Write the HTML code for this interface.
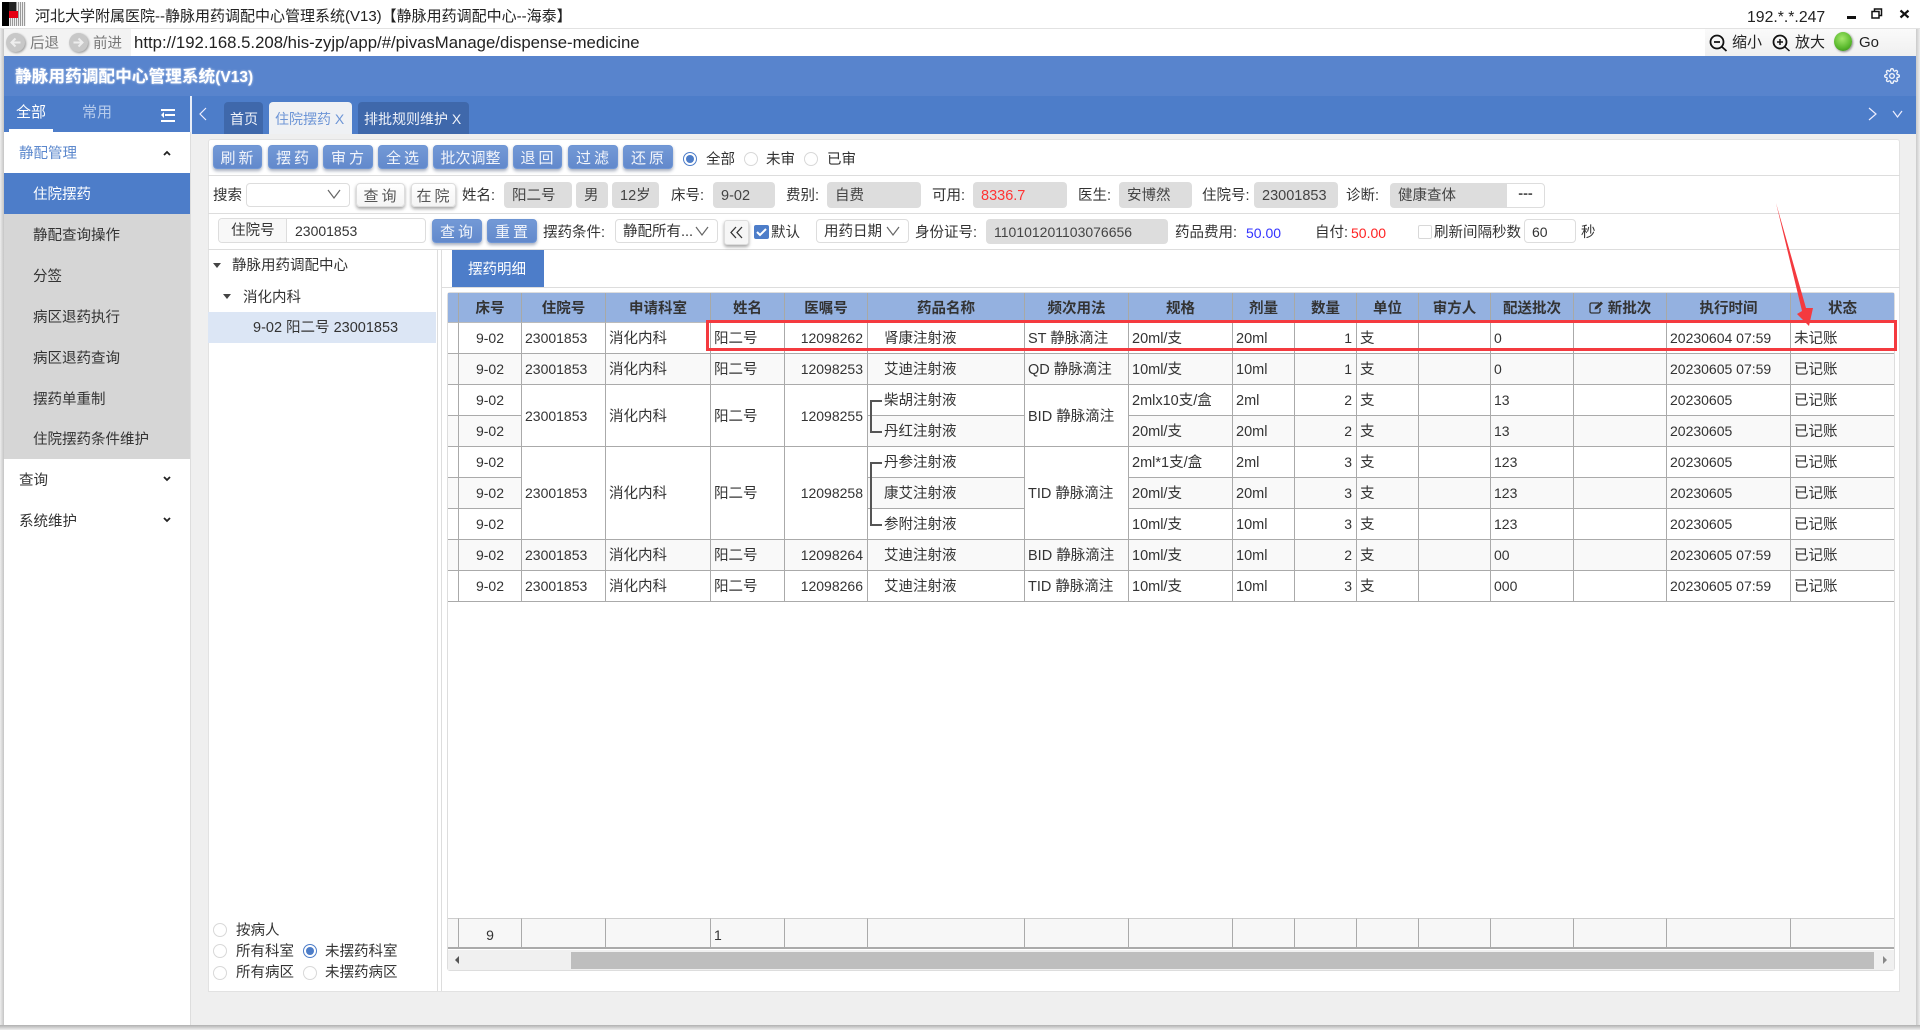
<!DOCTYPE html>
<html lang="zh-CN"><head><meta charset="utf-8"><title>静脉用药调配中心管理系统</title>
<style>
*{box-sizing:border-box}
html,body{margin:0;padding:0;width:1920px;height:1030px;overflow:hidden;background:#fff;font-family:"Liberation Sans","Noto Sans CJK SC",sans-serif;font-size:14.5px;color:#333}
.a{position:absolute;white-space:nowrap;line-height:22px;height:20px}
.k{line-height:20px}
.b{position:absolute}
.btn{position:absolute;height:24px;line-height:25px;background:linear-gradient(#7399d6,#6289cc);border:1px solid #6e95d4;border-radius:4px;box-shadow:0 2px 3px rgba(30,50,90,.4);color:#f2f5fb;text-align:center;letter-spacing:3px;font-size:15px;text-indent:2px}
.btn.n{letter-spacing:0;text-indent:0}
.wbtn{position:absolute;height:24px;line-height:25px;background:linear-gradient(#fff,#f4f4f4);border:1px solid #ddd;border-radius:4px;box-shadow:0 2px 3px rgba(0,0,0,.35);color:#555;text-align:center;letter-spacing:3px;font-size:15px;text-indent:2px}
.f{position:absolute;top:182px;height:26px;line-height:28px;background:#ddd;border-radius:4px;padding-left:8px;color:#444}
.sel{position:absolute;height:24px;line-height:25px;background:#fff;border:1px solid #ddd;border-radius:4px;padding-left:7px}
.rad{position:absolute;width:14px;height:14px;border:1px solid #d8d8d8;border-radius:50%;background:#fff}
.rad.on{border:1px solid #4d7dc8}
.rad.on:after{content:"";position:absolute;left:2px;top:2px;width:8px;height:8px;border-radius:50%;background:#4d7dc8}
.hl{position:absolute;height:1px;background:#ddd;left:208px;width:1692px}
.m{position:absolute;left:33px;line-height:24px;white-space:nowrap}
table{position:absolute;left:448px;top:293px;width:1446px;border-collapse:separate;border-spacing:0;table-layout:fixed}
th{height:30px;background:#94b1e0;border-right:1px solid #a8a9a6;border-bottom:1px solid #bbb;font-weight:bold;font-size:14.5px;color:#333;text-align:center;padding:0;white-space:nowrap}
th:last-child{border-right:0}
td{height:31px;line-height:20px;border-right:1px solid #aaa;border-bottom:1px solid #aaa;padding:2px 0 0 3px;font-size:14.5px;color:#333;white-space:nowrap;background:#fff;overflow:hidden}
td:last-child{border-right:0}
tr.g td{background:#f9f9f9}
td.m0{background:#fff!important}
td.c{text-align:center;padding:0}
td.r{text-align:right;padding:0 4px 0 0}
td.n{font-size:14px;padding-top:0}
td.d{padding-left:16px}
.foot td{background:#f7f7f7;border-bottom:2px solid #aaa;border-top:1px solid #ccc;padding-top:4px}
</style></head><body>

<!-- window title -->
<div class="b" style="left:2px;top:2px;width:24px;height:24px;background:repeating-linear-gradient(90deg,#999 0,#999 1px,#eee 1px,#eee 2px)"></div>
<div class="b" style="left:2px;top:2px;width:7px;height:24px;background:#000"></div>
<div class="b" style="left:9px;top:2px;width:7px;height:9px;background:#222"></div>
<div class="b" style="left:9px;top:11px;width:9px;height:7px;background:#e60012"></div>
<div class="a k" style="left:35px;top:7px;font-size:15px;color:#222">河北大学附属医院--静脉用药调配中心管理系统(V13)【静脉用药调配中心--海泰】</div>
<div class="a" style="left:1747px;top:7px;font-size:15.800px;color:#222">192.*.*.247</div>
<div class="b" style="left:1847px;top:16px;width:9px;height:3px;background:#111"></div>
<svg class="b" style="left:1871px;top:8px" width="12" height="11"><path d="M3.500 3V1h7v6.500H8M1 3.500h7v6.500H1z" fill="none" stroke="#111" stroke-width="1.500"/></svg>
<svg class="b" style="left:1899px;top:9px" width="11" height="10"><path d="M1.500 1.500l8 7M9.500 1.500l-8 7" fill="none" stroke="#111" stroke-width="2.200"/></svg>
<div class="b" style="left:0;top:28px;width:1920px;height:1px;background:#e2e2e2"></div>

<!-- address bar -->
<div class="b" style="left:0;top:29px;width:4px;height:1001px;background:linear-gradient(90deg,#eee,#c4c4c4)"></div>
<div class="b" style="left:1916px;top:29px;width:4px;height:1001px;background:linear-gradient(90deg,#c9c9c9,#eee)"></div>
<div class="b" style="left:4px;top:29px;width:127px;height:27px;background:#f3f3f3"></div>
<div class="b" style="left:6px;top:33px;width:19px;height:19px;border-radius:50%;background:#c8c8c8;box-shadow:1px 1px 2px #999"></div>
<svg class="b" style="left:6px;top:33px" width="19" height="19"><path d="M14.500 9.500H6M9.500 5.500l-4 4 4 4" fill="none" stroke="#eee" stroke-width="2"/></svg>
<div class="a" style="left:30px;top:33px;color:#777">后退</div>
<div class="b" style="left:69px;top:33px;width:19px;height:19px;border-radius:50%;background:#c8c8c8;box-shadow:1px 1px 2px #999"></div>
<svg class="b" style="left:69px;top:33px" width="19" height="19"><path d="M4.500 9.500H13M9.500 5.500l4 4-4 4" fill="none" stroke="#eee" stroke-width="2"/></svg>
<div class="a" style="left:93px;top:33px;color:#777">前进</div>
<div class="a" style="left:134px;top:32px;font-size:16.750px;color:#222;line-height:22px">http://192.168.5.208/his-zyjp/app/#/pivasManage/dispense-medicine</div>
<div class="b" style="left:1705px;top:29px;width:211px;height:27px;background:linear-gradient(#fafafa,#f0f0f0)"></div>
<svg class="b" style="left:1709px;top:34px" width="20" height="18"><circle cx="8" cy="8" r="6.500" fill="none" stroke="#111" stroke-width="1.800"/><path d="M5 8h6M12.500 12.500l5 4.500" fill="none" stroke="#111" stroke-width="1.800"/></svg>
<div class="a k" style="left:1732px;top:33px;font-size:15px;color:#222">缩小</div>
<svg class="b" style="left:1772px;top:34px" width="20" height="18"><circle cx="8" cy="8" r="6.500" fill="none" stroke="#111" stroke-width="1.800"/><path d="M5 8h6M8 5v6M12.500 12.500l5 4.500" fill="none" stroke="#111" stroke-width="1.500"/></svg>
<div class="a k" style="left:1795px;top:33px;font-size:15px;color:#222">放大</div>
<div class="b" style="left:1834px;top:32px;width:18px;height:19px;border-radius:50%;background:radial-gradient(circle at 45% 35%,#a4e86c,#58b82c 60%,#2f7d14);box-shadow:1px 1px 2px #888"></div>
<div class="a k" style="left:1859px;top:33px;font-size:15px;color:#222">Go</div>

<!-- blue header -->
<div class="b" style="left:4px;top:56px;width:1912px;height:40px;background:#5884cd"></div>
<div class="b" style="left:4px;top:96px;width:1912px;height:38px;background:#4d7dc9"></div>
<div class="a" style="left:15px;top:66px;font-size:16.700px;font-weight:bold;color:#fff;text-shadow:0 0 2px #cdd9f0">静脉用药调配中心管理系统<span style="font-size:15.500px">(V13)</span></div>
<svg class="b" style="left:1884px;top:68px" width="16" height="16" viewBox="0 0 24 24"><circle cx="12" cy="12" r="3.500" fill="none" stroke="#f2f5fb" stroke-width="2"/><path d="M19.400 15a1.650 1.650 0 0 0 .33 1.820l.06.06a2 2 0 0 1 0 2.830 2 2 0 0 1-2.830 0l-.06-.06a1.650 1.650 0 0 0-1.820-.33 1.650 1.650 0 0 0-1 1.510V21a2 2 0 0 1-2 2 2 2 0 0 1-2-2v-.09A1.650 1.650 0 0 0 9 19.400a1.650 1.650 0 0 0-1.820.33l-.06.06a2 2 0 0 1-2.830 0 2 2 0 0 1 0-2.830l.06-.06a1.650 1.650 0 0 0 .33-1.820 1.650 1.650 0 0 0-1.510-1H3a2 2 0 0 1-2-2 2 2 0 0 1 2-2h.09A1.650 1.650 0 0 0 4.600 9a1.650 1.650 0 0 0-.33-1.820l-.06-.06a2 2 0 0 1 0-2.830 2 2 0 0 1 2.830 0l.06.06a1.650 1.650 0 0 0 1.820.33H9a1.650 1.650 0 0 0 1-1.510V3a2 2 0 0 1 2-2 2 2 0 0 1 2 2v.09a1.650 1.650 0 0 0 1 1.510 1.650 1.650 0 0 0 1.820-.33l.06-.06a2 2 0 0 1 2.830 0 2 2 0 0 1 0 2.830l-.06.06a1.650 1.650 0 0 0-.33 1.820V9a1.650 1.650 0 0 0 1.510 1H21a2 2 0 0 1 2 2 2 2 0 0 1-2 2h-.09a1.650 1.650 0 0 0-1.510 1z" fill="none" stroke="#f2f5fb" stroke-width="2"/></svg>
<svg class="b" style="left:1868px;top:107px" width="10" height="14"><path d="M1 1l7 6-7 6" fill="none" stroke="#eef" stroke-width="1.200"/></svg>
<svg class="b" style="left:1892px;top:110px" width="11" height="8"><path d="M1 1l4.500 6L10 1" fill="none" stroke="#eef" stroke-width="1.200"/></svg>
<svg class="b" style="left:199px;top:107px" width="8" height="14"><path d="M7 1L1 7l6 6" fill="none" stroke="#eef" stroke-width="1.200"/></svg>

<!-- nav tabs -->
<div class="a" style="left:16px;top:102px;font-size:15px;color:#fff">全部</div>
<div class="a" style="left:82px;top:102px;font-size:15px;color:#b6cbec">常用</div>
<div class="b" style="left:9px;top:129px;width:44px;height:3px;background:#fff"></div>
<div class="b" style="left:161px;top:109px;width:14px;height:2px;background:#fff"></div>
<div class="b" style="left:165px;top:114px;width:10px;height:2px;background:#fff"></div>
<div class="b" style="left:161px;top:120px;width:14px;height:2px;background:#fff"></div>
<div class="b" style="left:161px;top:112px;width:0;height:0;border:3px solid transparent;border-right-color:#fff;border-left:0"></div>
<div class="b" style="left:190px;top:96px;width:2px;height:38px;background:#e8eef8"></div>

<!-- page tabs -->
<div class="b" style="left:224px;top:102px;width:39px;height:32px;background:#3f68ab;border-radius:4px 4px 0 0"></div>
<div class="a" style="left:230px;top:108px;color:#f0f3fa;font-size:14px">首页</div>
<div class="b" style="left:269px;top:102px;width:83px;height:32px;background:#eff1f4;border-radius:4px 4px 0 0"></div>
<div class="a" style="left:275px;top:108px;color:#6d95d6;font-size:14px">住院摆药 X</div>
<div class="b" style="left:358px;top:102px;width:111px;height:32px;background:#3f68ab;border-radius:4px 4px 0 0"></div>
<div class="a" style="left:364px;top:108px;color:#f0f3fa;font-size:14px">排批规则维护 X</div>

<!-- sidebar -->
<div class="b" style="left:4px;top:132px;width:187px;height:893px;background:#fff;border-right:1px solid #ddd"></div>
<div class="a" style="left:19px;top:143px;color:#5c88cd">静配管理</div>
<svg class="b" style="left:163px;top:150px" width="8" height="6"><path d="M1 5l3-3 3 3" fill="none" stroke="#222" stroke-width="1.800"/></svg>
<div class="b" style="left:4px;top:173px;width:186px;height:41px;background:#4d7dc9"></div>
<div class="b" style="left:4px;top:214px;width:186px;height:245px;background:#d6d6d6"></div>
<div class="a m" style="top:183px;color:#fff">住院摆药</div>
<div class="a m" style="top:224px">静配查询操作</div>
<div class="a m" style="top:265px">分签</div>
<div class="a m" style="top:306px">病区退药执行</div>
<div class="a m" style="top:347px">病区退药查询</div>
<div class="a m" style="top:388px">摆药单重制</div>
<div class="a m" style="top:428px">住院摆药条件维护</div>
<div class="a" style="left:19px;top:469px;line-height:24px">查询</div>
<svg class="b" style="left:163px;top:476px" width="8" height="6"><path d="M1 1l3 3 3-3" fill="none" stroke="#222" stroke-width="1.800"/></svg>
<div class="a" style="left:19px;top:510px;line-height:24px">系统维护</div>
<svg class="b" style="left:163px;top:517px" width="8" height="6"><path d="M1 1l3 3 3-3" fill="none" stroke="#222" stroke-width="1.800"/></svg>

<!-- content background -->
<div class="b" style="left:191px;top:134px;width:1725px;height:891px;background:#efefef"></div>
<div class="b" style="left:0;top:1025px;width:1920px;height:5px;background:linear-gradient(#b0b0b0,#eee)"></div>
<div class="b" style="left:208px;top:139px;width:1692px;height:853px;background:#fff;border:1px solid #e2e2e2;border-radius:3px 3px 0 0"></div>
<div class="hl" style="top:175px"></div>
<div class="hl" style="top:213px"></div>
<div class="hl" style="top:249px"></div>

<!-- toolbar row 1 -->
<div class="btn" style="left:213px;top:145px;width:49px">刷新</div>
<div class="btn" style="left:268px;top:145px;width:50px">摆药</div>
<div class="btn" style="left:323px;top:145px;width:50px">审方</div>
<div class="btn" style="left:378px;top:145px;width:50px">全选</div>
<div class="btn n" style="left:433px;top:145px;width:75px">批次调整</div>
<div class="btn" style="left:513px;top:145px;width:49px">退回</div>
<div class="btn" style="left:568px;top:145px;width:50px">过滤</div>
<div class="btn" style="left:623px;top:145px;width:50px">还原</div>
<div class="rad on" style="left:683px;top:152px"></div><div class="a" style="left:706px;top:149px">全部</div>
<div class="rad" style="left:744px;top:152px"></div><div class="a" style="left:766px;top:149px">未审</div>
<div class="rad" style="left:804px;top:152px"></div><div class="a" style="left:827px;top:149px">已审</div>

<!-- toolbar row 2 -->
<div class="a" style="left:213px;top:185px">搜索</div>
<div class="sel" style="left:246px;top:183px;width:104px"></div>
<svg class="b" style="left:327px;top:189px" width="14" height="11"><path d="M1 1l6 8 6-8" fill="none" stroke="#666" stroke-width="1.200"/></svg>
<div class="wbtn" style="left:356px;top:183px;width:49px">查询</div>
<div class="wbtn" style="left:411px;top:183px;width:45px">在院</div>
<div class="a" style="left:462px;top:185px">姓名:</div>
<div class="f" style="left:504px;width:68px">阳二号</div>
<div class="f" style="left:576px;width:32px">男</div>
<div class="f" style="left:612px;width:47px">12岁</div>
<div class="a" style="left:671px;top:185px">床号:</div>
<div class="f" style="left:713px;width:62px">9-02</div>
<div class="a" style="left:786px;top:185px">费别:</div>
<div class="f" style="left:827px;width:94px">自费</div>
<div class="a" style="left:932px;top:185px">可用:</div>
<div class="f" style="left:973px;width:94px;color:#f33">8336.7</div>
<div class="a" style="left:1078px;top:185px">医生:</div>
<div class="f" style="left:1119px;width:73px">安博然</div>
<div class="a" style="left:1202px;top:185px">住院号:</div>
<div class="f" style="left:1254px;width:84px">23001853</div>
<div class="a" style="left:1346px;top:185px">诊断:</div>
<div class="f" style="left:1390px;top:183px;width:117px;height:25px;line-height:26px;border-radius:4px 0 0 4px">健康查体</div>
<div class="b" style="left:1506px;top:183px;width:39px;height:25px;border:1px solid #ddd;border-radius:0 4px 4px 0;text-align:center;line-height:20px;color:#555;font-weight:bold">---</div>

<!-- toolbar row 3 -->
<div class="b" style="left:218px;top:218px;width:208px;height:25px;background:#fff;border:1px solid #ddd;border-radius:4px"></div>
<div class="b" style="left:219px;top:219px;width:68px;height:23px;background:#f8f8f8;border-right:1px solid #ddd;border-radius:4px 0 0 4px"></div>
<div class="a" style="left:231px;top:220px">住院号</div>
<div class="a" style="left:295px;top:220px;font-size:14px">23001853</div>
<div class="btn" style="left:432px;top:219px;width:50px">查询</div>
<div class="btn" style="left:487px;top:219px;width:50px">重置</div>
<div class="a" style="left:543px;top:222px">摆药条件:</div>
<div class="sel" style="left:615px;top:219px;width:103px">静配所有...</div>
<svg class="b" style="left:695px;top:226px" width="14" height="10"><path d="M1 1l6 8 6-8" fill="none" stroke="#666" stroke-width="1.200"/></svg>
<div class="b" style="left:724px;top:220px;width:25px;height:25px;background:#f6f6f6;border:1px solid #ddd;border-radius:3px;box-shadow:0 2px 3px rgba(0,0,0,.35)"></div>
<svg class="b" style="left:730px;top:226px" width="14" height="13"><path d="M6 1L1 6.500 6 12M12 1L7 6.500 12 12" fill="none" stroke="#333" stroke-width="1.300"/></svg>
<div class="b" style="left:754px;top:225px;width:15px;height:14px;background:#4d7dc9;border-radius:2px"></div>
<svg class="b" style="left:754px;top:225px" width="15" height="14"><path d="M3 7l3 3 6-6" fill="none" stroke="#fff" stroke-width="2"/></svg>
<div class="a" style="left:771px;top:222px">默认</div>
<div class="sel" style="left:816px;top:219px;width:93px">用药日期</div>
<svg class="b" style="left:886px;top:226px" width="14" height="10"><path d="M1 1l6 8 6-8" fill="none" stroke="#666" stroke-width="1.200"/></svg>
<div class="a" style="left:915px;top:222px">身份证号:</div>
<div class="f" style="left:986px;top:219px;width:182px;height:25px;line-height:27px;font-size:14px">110101201103076656</div>
<div class="a" style="left:1175px;top:222px">药品费用:</div>
<div class="a" style="left:1246px;top:222px;color:#33f;font-size:14px">50.00</div>
<div class="a" style="left:1315px;top:222px">自付:</div>
<div class="a" style="left:1351px;top:222px;color:#f22;font-size:14px">50.00</div>
<div class="b" style="left:1418px;top:225px;width:14px;height:14px;background:#fff;border:1px solid #d8d8d8;border-radius:2px"></div>
<div class="a" style="left:1434px;top:222px">刷新间隔秒数</div>
<div class="sel" style="left:1524px;top:219px;width:52px;font-size:14px">60</div>
<div class="a" style="left:1581px;top:222px">秒</div>

<!-- tree -->
<div class="b" style="left:437px;top:250px;width:1px;height:741px;background:#ddd"></div>
<div class="b" style="left:441px;top:250px;width:1px;height:741px;background:#ddd"></div>
<div class="b" style="left:213px;top:263px;border:4px solid transparent;border-top:5px solid #444;border-bottom:0"></div>
<div class="a" style="left:232px;top:255px">静脉用药调配中心</div>
<div class="b" style="left:223px;top:294px;border:4px solid transparent;border-top:5px solid #444;border-bottom:0"></div>
<div class="a" style="left:243px;top:286px;line-height:24px">消化内科</div>
<div class="b" style="left:208px;top:312px;width:228px;height:31px;background:#dce6f5"></div>
<div class="a" style="left:253px;top:317px">9-02 阳二号 23001853</div>
<div class="rad" style="left:213px;top:923px"></div><div class="a" style="left:236px;top:919px;line-height:24px">按病人</div>
<div class="rad" style="left:213px;top:944px"></div><div class="a" style="left:236px;top:940px;line-height:24px">所有科室</div>
<div class="rad on" style="left:303px;top:944px"></div><div class="a" style="left:325px;top:940px;line-height:24px">未摆药科室</div>
<div class="rad" style="left:213px;top:966px"></div><div class="a" style="left:236px;top:962px;line-height:23px">所有病区</div>
<div class="rad" style="left:303px;top:966px"></div><div class="a" style="left:325px;top:962px;line-height:23px">未摆药病区</div>

<!-- detail tab -->
<div class="b" style="left:442px;top:287px;width:1458px;height:1px;background:#ddd"></div>
<div class="b" style="left:452px;top:250px;width:92px;height:37px;background:#4d7dc9"></div>
<div class="a" style="left:468px;top:259px;color:#fff">摆药明细</div>

<!-- grid frame -->
<div class="b" style="left:447px;top:292px;width:1448px;height:679px;border:1px solid #ddd;border-radius:3px"></div>

<table>
<colgroup><col style="width:11px"><col style="width:63px"><col style="width:84px"><col style="width:105px"><col style="width:74px"><col style="width:83px"><col style="width:157px"><col style="width:104px"><col style="width:104px"><col style="width:62px"><col style="width:62px"><col style="width:62px"><col style="width:72px"><col style="width:83px"><col style="width:93px"><col style="width:124px"><col style="width:103px"></colgroup>
<tr><th></th><th>床号</th><th>住院号</th><th>申请科室</th><th>姓名</th><th>医嘱号</th><th>药品名称</th><th>频次用法</th><th>规格</th><th>剂量</th><th>数量</th><th>单位</th><th>审方人</th><th>配送批次</th><th><svg width="15" height="13" style="vertical-align:-1px" viewBox="0 0 15 13"><path d="M10 2H2.500a1.500 1.500 0 0 0-1.500 1.500v7A1.500 1.500 0 0 0 2.500 12h7a1.500 1.500 0 0 0 1.500-1.500V7" fill="none" stroke="#333" stroke-width="1.300"/><path d="M5.500 8.500L6 6l6-5.500 2 2-6 5.500z" fill="#333"/></svg> 新批次</th><th>执行时间</th><th>状态</th></tr>
<tr><td></td><td class="c n">9-02</td><td class="n">23001853</td><td>消化内科</td><td>阳二号</td><td class="r n">12098262</td><td class="d">肾康注射液</td><td>ST 静脉滴注</td><td>20ml/支</td><td>20ml</td><td class="r n">1</td><td>支</td><td></td><td class="n">0</td><td></td><td class="n">20230604 07:59</td><td>未记账</td></tr>
<tr class="g"><td></td><td class="c n">9-02</td><td class="n">23001853</td><td>消化内科</td><td>阳二号</td><td class="r n">12098253</td><td class="d">艾迪注射液</td><td>QD 静脉滴注</td><td>10ml/支</td><td>10ml</td><td class="r n">1</td><td>支</td><td></td><td class="n">0</td><td></td><td class="n">20230605 07:59</td><td>已记账</td></tr>
<tr><td></td><td class="c n">9-02</td><td rowspan="2" class="n m0">23001853</td><td rowspan="2" class="m0">消化内科</td><td rowspan="2" class="m0">阳二号</td><td rowspan="2" class="r n m0">12098255</td><td class="d">柴胡注射液</td><td rowspan="2" class="m0">BID 静脉滴注</td><td>2mlx10支/盒</td><td>2ml</td><td class="r n">2</td><td>支</td><td></td><td class="n">13</td><td></td><td class="n">20230605</td><td>已记账</td></tr>
<tr class="g"><td></td><td class="c n">9-02</td><td class="d">丹红注射液</td><td>20ml/支</td><td>20ml</td><td class="r n">2</td><td>支</td><td></td><td class="n">13</td><td></td><td class="n">20230605</td><td>已记账</td></tr>
<tr><td></td><td class="c n">9-02</td><td rowspan="3" class="n m0">23001853</td><td rowspan="3" class="m0">消化内科</td><td rowspan="3" class="m0">阳二号</td><td rowspan="3" class="r n m0">12098258</td><td class="d">丹参注射液</td><td rowspan="3" class="m0">TID 静脉滴注</td><td>2ml*1支/盒</td><td>2ml</td><td class="r n">3</td><td>支</td><td></td><td class="n">123</td><td></td><td class="n">20230605</td><td>已记账</td></tr>
<tr class="g"><td></td><td class="c n">9-02</td><td class="d">康艾注射液</td><td>20ml/支</td><td>20ml</td><td class="r n">3</td><td>支</td><td></td><td class="n">123</td><td></td><td class="n">20230605</td><td>已记账</td></tr>
<tr><td></td><td class="c n">9-02</td><td class="d">参附注射液</td><td>10ml/支</td><td>10ml</td><td class="r n">3</td><td>支</td><td></td><td class="n">123</td><td></td><td class="n">20230605</td><td>已记账</td></tr>
<tr class="g"><td></td><td class="c n">9-02</td><td class="n">23001853</td><td>消化内科</td><td>阳二号</td><td class="r n">12098264</td><td class="d">艾迪注射液</td><td>BID 静脉滴注</td><td>10ml/支</td><td>10ml</td><td class="r n">2</td><td>支</td><td></td><td class="n">00</td><td></td><td class="n">20230605 07:59</td><td>已记账</td></tr>
<tr><td></td><td class="c n">9-02</td><td class="n">23001853</td><td>消化内科</td><td>阳二号</td><td class="r n">12098266</td><td class="d">艾迪注射液</td><td>TID 静脉滴注</td><td>10ml/支</td><td>10ml</td><td class="r n">3</td><td>支</td><td></td><td class="n">000</td><td></td><td class="n">20230605 07:59</td><td>已记账</td></tr>
</table>

<!-- drug group brackets -->
<svg class="b" style="left:868px;top:395px" width="16" height="135"><path d="M14 6H3v31h11M14 68H3v62h11" fill="none" stroke="#555" stroke-width="2"/></svg>

<!-- footer row -->
<table style="top:918px"><colgroup><col style="width:11px"><col style="width:63px"><col style="width:84px"><col style="width:105px"><col style="width:74px"><col style="width:83px"><col style="width:157px"><col style="width:104px"><col style="width:104px"><col style="width:62px"><col style="width:62px"><col style="width:62px"><col style="width:72px"><col style="width:83px"><col style="width:93px"><col style="width:124px"><col style="width:103px"></colgroup>
<tr class="foot"><td></td><td class="c n">9</td><td></td><td></td><td class="n">1</td><td></td><td></td><td></td><td></td><td></td><td></td><td></td><td></td><td></td><td></td><td></td><td></td></tr></table>

<!-- scrollbar -->
<div class="b" style="left:448px;top:950px;width:1446px;height:20px;background:#f0f0f0"></div>
<div class="b" style="left:571px;top:952px;width:1303px;height:17px;background:#bebebe"></div>
<div class="b" style="left:455px;top:956px;border:4px solid transparent;border-right:4px solid #555;border-left:0"></div>
<div class="b" style="left:1883px;top:956px;border:4px solid transparent;border-left:4px solid #888;border-right:0"></div>

<!-- red annotations -->
<div class="b" style="left:706px;top:320px;height:31px;border:3px solid #f43a3f;width:1191px"></div>
<svg class="b" style="left:1770px;top:200px" width="50" height="130"><polygon points="6,3 36,108 43,108 39,126 27,114 32,111" fill="#f43a3f"/></svg>
</body></html>
